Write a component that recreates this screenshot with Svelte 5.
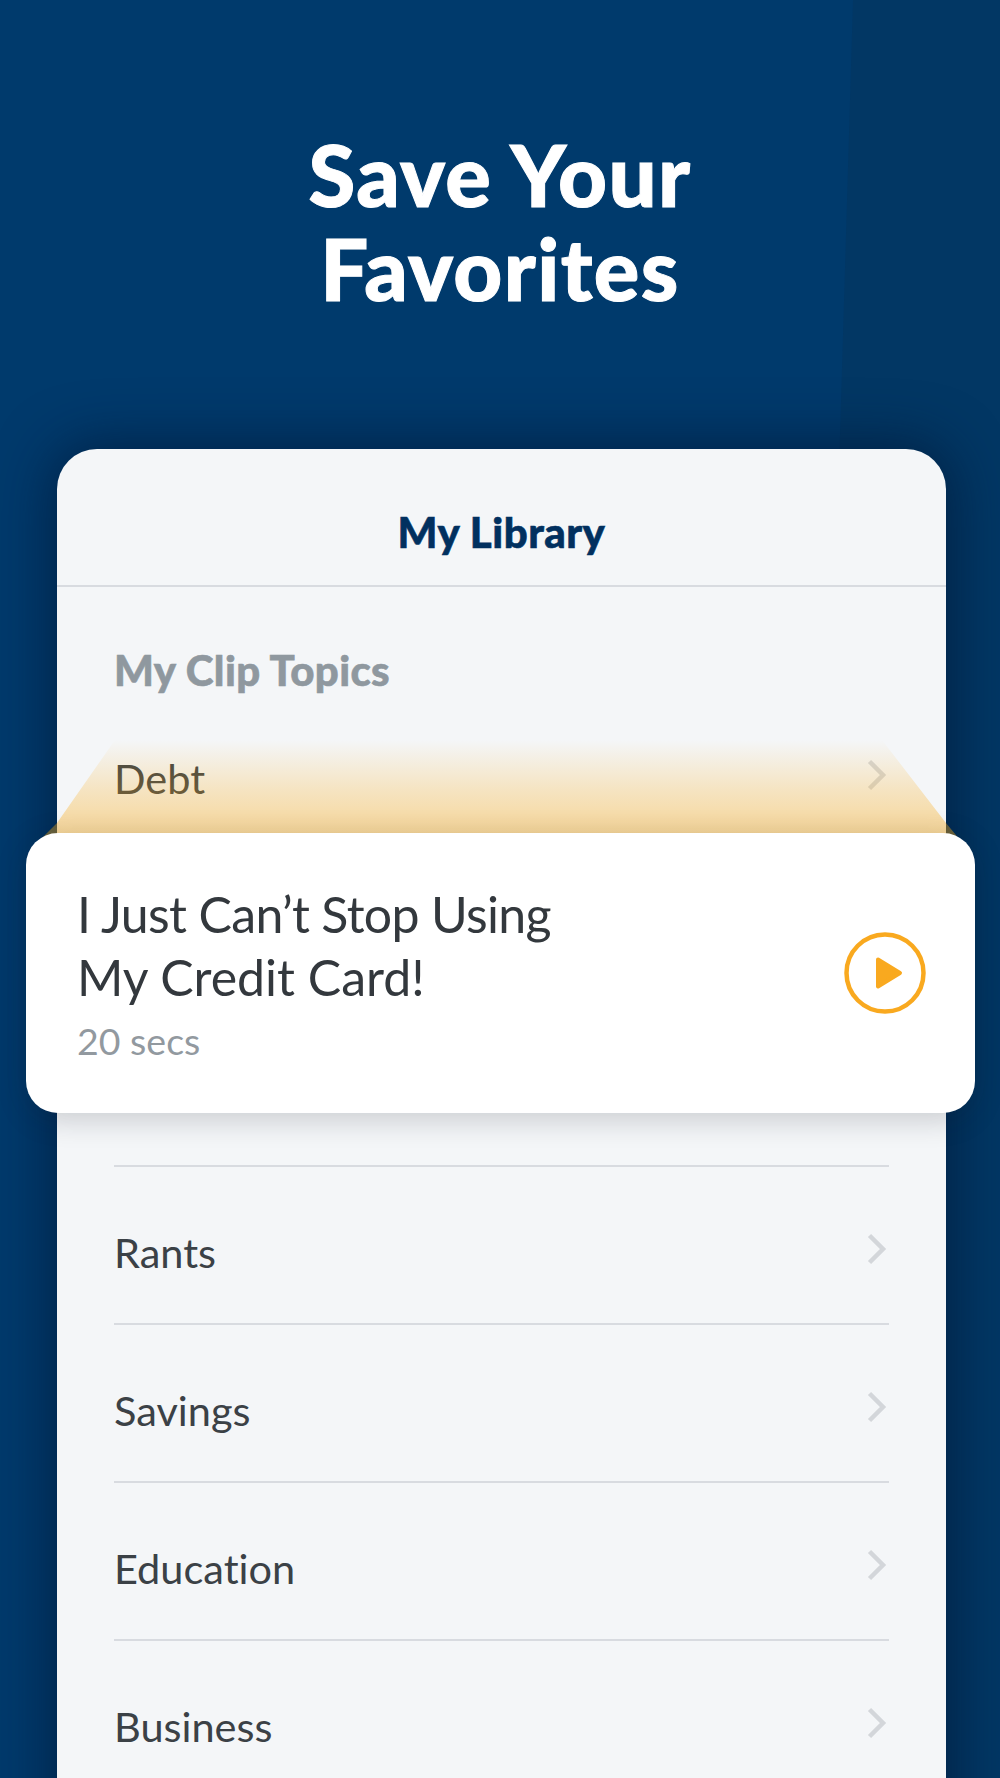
<script>
  const topics = [
    { label: 'Debt' },
    { label: '' },
    { label: '' },
    { label: 'Rants' },
    { label: 'Savings' },
    { label: 'Education' },
    { label: 'Business' }
  ];
</script>

<div class="page">
  <div class="strip"></div>
  <h1>Save Your<br />Favorites</h1>

  <section class="library">
    <header>My Library</header>
    <div class="content">
      <h2>My Clip Topics</h2>
      <ul>
        {#each topics as topic}
          <li>
            <span>{topic.label}</span>
            {#if topic.label}
              <svg class="chev" width="20" height="32" viewBox="0 0 20 32" aria-hidden="true">
                <path d="M2.500 2.500 L16 16 L2.500 29.500" fill="none" stroke="#d3d6da" stroke-width="4.500" />
              </svg>
            {/if}
          </li>
        {/each}
      </ul>
    </div>
  </section>

  <div class="glow"></div>

  <article class="clip">
    <div>
      <h3><span class="tight">I Just Can’t Stop Using</span><br />My Credit Card!</h3>
      <p>20 secs</p>
    </div>
    <svg class="play" width="82" height="82" viewBox="0 0 82 82" aria-hidden="true">
      <circle cx="41" cy="41" r="38.500" fill="none" stroke="#f9a91f" stroke-width="4.500" />
      <path d="M34 27.500 L56 41 L34 54.500 Z" fill="#f9a91f" stroke="#f9a91f" stroke-width="4" stroke-linejoin="round" />
    </svg>
  </article>
</div>

<style>
  :global(body) {
    margin: 0;
  }
  .page {
    position: relative;
    width: 1000px;
    height: 1778px;
    overflow: hidden;
    background: #003a6c;
    font-family: Lato, "Liberation Sans", sans-serif;
    font-variant-ligatures: none;
    padding-top: 127px;
    box-sizing: border-box;
  }
  .strip {
    position: absolute;
    inset: 0;
    background: #023764;
    clip-path: polygon(853px 0, 1000px 0, 1000px 1778px, 800px 1778px);
  }
  h1 {
    position: relative;
    margin: 0;
    color: #fff;
    font-size: 85px;
    line-height: 94px;
    font-weight: 900;
    letter-spacing: 1.400px;
    -webkit-text-stroke: 1px #fff;
    text-align: center;
  }
  .library {
    position: relative;
    margin: 134px 54px 0 57px;
    height: 1400px;
    background: #f4f6f8;
    border-radius: 40px 40px 0 0;
    box-shadow: 0 0 55px 5px rgba(0, 22, 50, 0.65);
  }
  header {
    height: 138px;
    box-sizing: border-box;
    border-bottom: 2px solid #d8dbe0;
    color: #01305f;
    font-size: 42px;
    font-weight: 900;
    letter-spacing: 0.500px;
    -webkit-text-stroke: 0.600px #01305f;
    line-height: 166px;
    text-align: center;
  }
  .content {
    padding: 0 57px;
  }
  h2 {
    margin: 0;
    height: 106px;
    color: #8f989f;
    font-size: 42px;
    font-weight: 900;
    letter-spacing: 0.350px;
    -webkit-text-stroke: 0.600px #8f989f;
    line-height: 167px;
  }
  ul {
    list-style: none;
    margin: 0;
    padding: 0;
  }
  li {
    height: 158px;
    box-sizing: border-box;
    border-bottom: 2px solid #d8dbe0;
    display: flex;
    align-items: center;
    justify-content: space-between;
    color: #3b4146;
    font-size: 41.500px;
    padding-top: 13px;
  }
  .chev {
    margin: -5px 2px 0 0;
  }
  .glow {
    position: absolute;
    left: 40px;
    top: 740px;
    width: 920px;
    height: 100px;
    background: linear-gradient(to bottom, rgba(250, 170, 20, 0), rgba(250, 170, 20, 0.24) 50%, rgba(250, 170, 20, 0.42) 93%);
    clip-path: polygon(75px 0, 842px 0, 906px 83px, 920px 100px, 0 100px, 17px 83px);
  }
  .clip {
    position: absolute;
    left: 26px;
    top: 833px;
    width: 949px;
    height: 280px;
    box-sizing: border-box;
    padding: 50px 49px 0 51px;
    background: #fff;
    border-radius: 32px;
    box-shadow: 0 6px 30px rgba(20, 25, 40, 0.2);
    display: flex;
    justify-content: space-between;
  }
  h3 {
    margin: 0;
    color: #33383d;
    font-size: 50px;
    line-height: 63px;
    font-weight: 400;
  }
  .tight {
    letter-spacing: -0.650px;
  }
  p {
    margin: 10px 0 0;
    color: #92999f;
    font-size: 37.500px;
    line-height: 44px;
  }
  .play {
    margin-top: 49px;
  }
</style>
